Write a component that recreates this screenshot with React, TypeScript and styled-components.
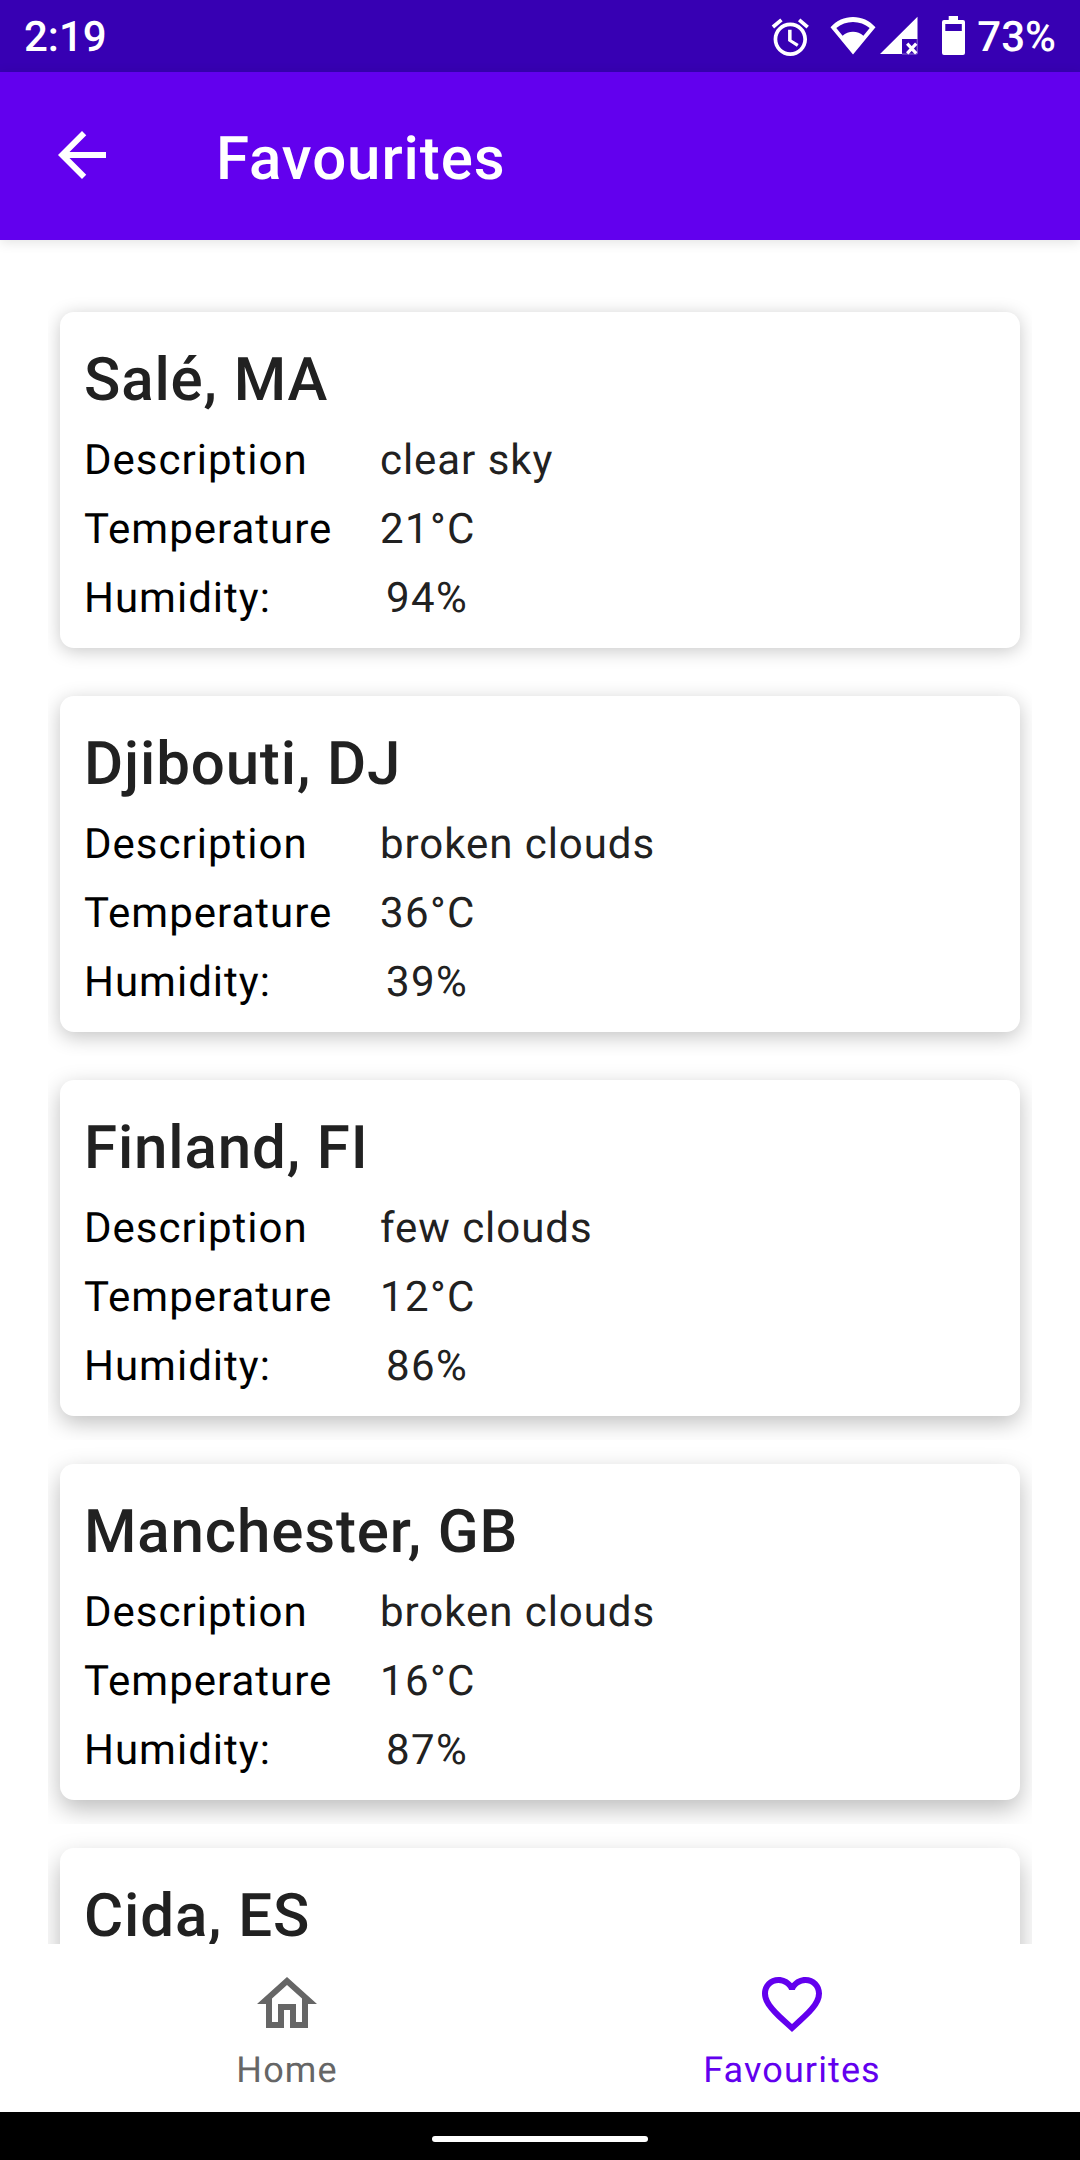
import React from "react";
import styled, { createGlobalStyle } from "styled-components";

const GlobalStyle = createGlobalStyle`
  *, *::before, *::after { box-sizing: border-box; }
  body {
    margin: 0;
    background: #fff;
    font-family: Roboto, "Noto Sans", sans-serif;
    text-rendering: geometricPrecision;
  }
`;

const Screen = styled.div`
  display: flex;
  flex-direction: column;
  width: 1080px;
  height: 2160px;
  overflow: hidden;
  background: #fff;
`;

const StatusBar = styled.div`
  display: flex;
  flex: none;
  align-items: center;
  justify-content: space-between;
  height: 72px;
  padding: 2px 24px 0 24px;
  background: #3700b3;
  color: #fff;
  font-size: 42px;
  font-weight: 500;
  line-height: 70px;
`;

const Clock = styled.span`
  padding-top: 2px;
`;

const StatusIcons = styled.div`
  display: flex;
  align-items: center;
  height: 70px;

  svg { display: block; flex: none; }
`;

const BatteryLevel = styled.span`
  margin-left: 12px;
  padding-top: 2px;
`;

const AppBar = styled.header`
  display: flex;
  flex: none;
  align-items: center;
  height: 168px;
  padding: 0 46px;
  background: #6200ee;
  color: #fff;
  box-shadow: 0 2px 12px rgba(0, 0, 0, 0.12);
  z-index: 1;
`;

const BackButton = styled.button`
  display: block;
  width: 72px;
  height: 72px;
  margin: 0 98px 2px 0;
  padding: 0;
  border: 0;
  background: none;
  color: inherit;

  svg { display: block; }
`;

const AppTitle = styled.h1`
  margin: 0;
  padding-top: 6px;
  font-size: 60px;
  font-weight: 500;
  line-height: 70px;
  letter-spacing: 0.95px;
`;

const List = styled.main`
  flex: 1;
  min-height: 0;
  padding: 48px 48px 0;
  overflow: hidden;
`;

const ListItem = styled.div`
  height: 384px;
  padding: 24px 12px;
  overflow: hidden;
`;

const Card = styled.article<{ $drop: number }>`
  height: 336px;
  padding: 33px 24px 0;
  border-radius: 14px;
  background: #fff;
  box-shadow: 0 ${(p) => 3 + p.$drop * 2}px ${(p) => 18 + p.$drop * 2}px
    rgba(0, 0, 0, ${(p) => 0.22 + p.$drop * 0.015});
`;

const City = styled.h2`
  margin: 0 0 11px;
  color: #212121;
  font-size: 60px;
  font-weight: 500;
  line-height: 70px;
  letter-spacing: 0.87px;
  white-space: nowrap;
`;

const Field = styled.div`
  display: grid;
  grid-template-columns: 296px 1fr;
  font-size: 42px;
  line-height: 69px;
  letter-spacing: 1px;
`;

const Label = styled.span`
  color: #000;
`;

const Value = styled.span<{ $indent?: boolean; $numeric?: boolean }>`
  padding-left: ${(p) => (p.$indent ? 6 : 0)}px;
  color: #212121;
  letter-spacing: ${(p) => (p.$numeric ? 1.4 : 0.95)}px;
`;

const BottomNav = styled.nav`
  display: flex;
  flex: none;
  height: 168px;
  padding-left: 34.5px;
  background: #fff;
`;

const NavItem = styled.a<{ $active?: boolean }>`
  display: flex;
  flex-direction: column;
  align-items: center;
  width: 505px;
  padding-top: 24px;
  color: ${(p) => (p.$active ? "#6200ee" : "#666")};
  font-size: 36px;
  line-height: 42px;
  letter-spacing: 1.1px;

  svg { display: block; margin-bottom: 9px; }
`;

const GestureBar = styled.div`
  display: flex;
  flex: none;
  align-items: center;
  justify-content: center;
  height: 48px;
  padding-top: 6px;
  background: #000;
`;

const GestureHandle = styled.div`
  width: 216px;
  height: 6px;
  border-radius: 3px;
  background: #fff;
`;

const MaterialIcon = ({ d, size = 72 }: { d: string; size?: number }) => (
  <svg width={size} height={size} viewBox="0 0 24 24" fill="currentColor">
    <path d={d} />
  </svg>
);

const ARROW = "M20 11H7.83l5.59-5.59L12 4l-8 8 8 8 1.41-1.41L7.83 13H20v-2z";
const HOME = "M12 5.69l5 4.5V18h-2v-6H9v6H7v-7.81l5-4.5M12 3L2 12h3v8h6v-6h2v6h6v-8h3L12 3z";
const HEART =
  "M16.5 3c-1.74 0-3.41.81-4.5 2.09C10.91 3.81 9.24 3 7.5 3 4.42 3 2 5.42 2 8.5c0 3.78 3.4 6.86 8.55 11.54L12 21.35l1.45-1.32C18.6 15.36 22 12.28 22 8.5 22 5.42 19.58 3 16.5 3zm-4.4 15.55l-.1.1-.1-.1C7.14 14.24 4 11.39 4 8.5 4 6.5 5.5 5 7.5 5c1.54 0 3.04.99 3.57 2.36h1.87C13.46 5.99 14.96 5 16.5 5c2 0 3.5 1.5 3.5 3.5 0 2.89-3.14 5.74-7.9 10.05z";
const ALARM =
  "M22 5.72l-4.6-3.86-1.29 1.53 4.6 3.86L22 5.72zM7.88 3.39L6.6 1.86 2 5.71l1.29 1.53 4.59-3.85zM12.7 8H10.8v6l4.75 3.1.95-1.5-3.8-2.3V8zM12 4c-4.97 0-9 4.03-9 9s4.02 9 9 9c4.97 0 9-4.03 9-9s-4.03-9-9-9zm0 16c-3.87 0-7-3.13-7-7s3.13-7 7-7 7 3.13 7 7-3.13 7-7 7z";

const WifiIcon = () => (
  <svg width="46" height="70" viewBox="0 2 46 70" fill="#fff">
    <path
      fillRule="evenodd"
      d="M23 54.5L.5 27.3C6.5 20.5 14.5 17 23 17s16.5 3.5 22.5 10.3zM6.3 28L12.6 35.7C15.5 33 19 31.7 23 31.7s7.5 1.3 10.4 4L39.7 28C35 24.2 29.3 22 23 22S11 24.2 6.3 28z"
    />
  </svg>
);

const SignalIcon = () => (
  <svg width="38" height="70" viewBox="0 2 38 70">
    <path d="M0 54L37.5 16.7V39H22v15z" fill="#fff" />
    <path d="M22 54H37.2V39" fill="none" stroke="#fff" strokeOpacity=".6" strokeWidth=".7" />
    <path d="M27.2 43.7l9 9.6M36.2 43.7l-9 9.6" stroke="#fff" strokeWidth="3.2" />
  </svg>
);

const BatteryIcon = () => (
  <svg width="23" height="70" viewBox="0 2 23 70" fill="#fff">
    <path
      fillRule="evenodd"
      d="M6.7 16h9.3v4h5a2 2 0 0 1 2 2v31a2 2 0 0 1-2 2H2a2 2 0 0 1-2-2V22a2 2 0 0 1 2-2h4.7zM3.3 24v7h16.500v-7z"
    />
  </svg>
);

const AlarmBox = styled.span`
  margin-right: 17.5px;
`;
const WifiBox = styled.span`
  margin-right: 4px;
`;
const SignalBox = styled.span`
  margin-right: 24px;
`;

const favourites = [
  { city: "Salé, MA", description: "clear sky", temperature: 21, humidity: 94 },
  { city: "Djibouti, DJ", description: "broken clouds", temperature: 36, humidity: 39 },
  { city: "Finland, FI", description: "few clouds", temperature: 12, humidity: 86 },
  { city: "Manchester, GB", description: "broken clouds", temperature: 16, humidity: 87 },
  { city: "Cida, ES", description: "", temperature: null, humidity: null },
];

export default function App() {
  return (
    <>
      <GlobalStyle />
      <Screen>
        <StatusBar>
          <Clock>2:19</Clock>
          <StatusIcons>
            <AlarmBox><MaterialIcon d={ALARM} size={44.6} /></AlarmBox>
            <WifiBox><WifiIcon /></WifiBox>
            <SignalBox><SignalIcon /></SignalBox>
            <BatteryIcon />
            <BatteryLevel>73%</BatteryLevel>
          </StatusIcons>
        </StatusBar>
        <AppBar>
          <BackButton aria-label="Back"><MaterialIcon d={ARROW} /></BackButton>
          <AppTitle>Favourites</AppTitle>
        </AppBar>
        <List>
          {favourites.map((f, i) => (
            <ListItem key={f.city}>
              <Card $drop={i}>
                <City>{f.city}</City>
                {f.temperature !== null && (
                  <>
                    <Field><Label>Description</Label><Value>{f.description}</Value></Field>
                    <Field><Label>Temperature</Label><Value $numeric>{f.temperature}°C</Value></Field>
                    <Field><Label>Humidity:</Label><Value $indent $numeric>{f.humidity}%</Value></Field>
                  </>
                )}
              </Card>
            </ListItem>
          ))}
        </List>
        <BottomNav>
          <NavItem><MaterialIcon d={HOME} />Home</NavItem>
          <NavItem $active><MaterialIcon d={HEART} />Favourites</NavItem>
        </BottomNav>
        <GestureBar><GestureHandle /></GestureBar>
      </Screen>
    </>
  );
}
